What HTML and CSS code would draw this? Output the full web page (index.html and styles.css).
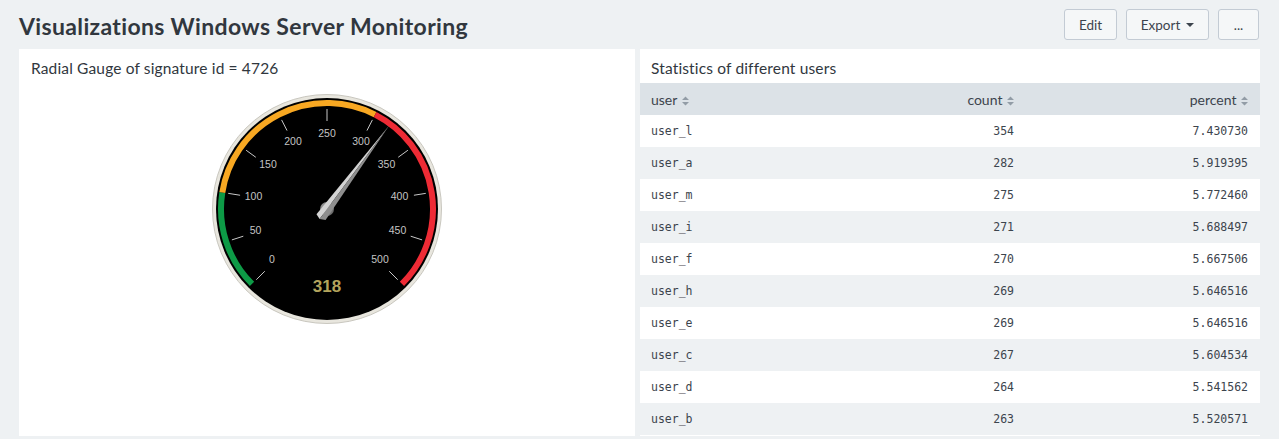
FILE: index.html
```html
<!DOCTYPE html>
<html>
<head>
<meta charset="utf-8">
<link rel="stylesheet" href="styles.css">
</head>
<body>
<div class="topbar">
  <h1 class="page-title">Visualizations Windows Server Monitoring</h1>
  <div class="actions">
    <button class="btn btn-edit">Edit</button>
    <button class="btn btn-export">Export <span class="caret"></span></button>
    <button class="btn btn-more">...</button>
  </div>
</div>
<div class="panels">
  <section class="panel panel-left">
    <h2 class="panel-title">Radial Gauge of signature id = 4726</h2>
    <div class="gauge-wrap">
      <svg class="gauge" width="232" height="232" viewBox="0 0 232 232">
        <defs>
          <radialGradient id="hubg" cx="0.4" cy="0.4" r="0.7">
            <stop offset="0" stop-color="#b0b0b0"/>
            <stop offset="1" stop-color="#5e5e5e"/>
          </radialGradient>
        </defs>
        <circle cx="116" cy="116" r="114.5" fill="#e8e6de" stroke="#c9c7bf" stroke-width="1"/>
        <circle cx="116" cy="116" r="111" fill="#000"/>
        <g fill="none" stroke-width="6">
          <path d="M41.05,190.95 A106,106 0 0 1 11.3,99.42" stroke="#0d9a46"/>
          <path d="M11.3,99.42 A106,106 0 0 1 164.12,21.55" stroke="#f8a822"/>
          <path d="M164.12,21.55 A106,106 0 0 1 190.95,190.95" stroke="#ee2b35"/>
        </g>
        <g stroke="#c8c8c8" stroke-width="1">
          <line x1="53.78" y1="178.22" x2="45.29" y2="186.71"/>
          <line x1="32.30" y1="143.19" x2="20.89" y2="146.90"/>
          <line x1="29.08" y1="102.24" x2="17.23" y2="100.36"/>
          <line x1="44.81" y1="64.27" x2="35.10" y2="57.22"/>
          <line x1="76.05" y1="37.59" x2="70.60" y2="26.90"/>
          <line x1="116" y1="28" x2="116" y2="16"/>
          <line x1="155.95" y1="37.59" x2="161.40" y2="26.90"/>
          <line x1="187.19" y1="64.27" x2="196.90" y2="57.22"/>
          <line x1="202.92" y1="102.24" x2="214.77" y2="100.36"/>
          <line x1="199.70" y1="143.19" x2="211.11" y2="146.90"/>
          <line x1="178.22" y1="178.22" x2="186.71" y2="186.71"/>
        </g>
        <g class="gauge-labels" text-anchor="middle" dominant-baseline="central">
          <text x="61" y="166">0</text>
          <text x="44.5" y="137">50</text>
          <text x="42.5" y="102.5">100</text>
          <text x="57" y="70.5">150</text>
          <text x="82" y="48">200</text>
          <text x="116" y="40">250</text>
          <text x="150" y="48">300</text>
          <text x="175.5" y="70.5">350</text>
          <text x="188.5" y="102.5">400</text>
          <text x="186.5" y="137">450</text>
          <text x="169" y="166">500</text>
        </g>
        <circle cx="116" cy="116" r="7" fill="url(#hubg)"/>
        <polygon points="178.17,32.62 105.5,121.3 108.6,126.0" fill="#d4d4d4"/>
        <polygon points="178.17,32.62 108.6,126.0 114.6,127.0" fill="#8e8e8e"/>
        <text class="gauge-value" x="116" y="193" text-anchor="middle" dominant-baseline="central">318</text>
      </svg>
    </div>
  </section>
  <section class="panel panel-right">
    <h2 class="panel-title">Statistics of different users</h2>
    <table class="stats">
      <thead>
        <tr>
          <th class="c-user">user <svg class="sort" width="7" height="10" viewBox="0 0 7 10"><path d="M0,4 L3.5,0.5 L7,4 Z M0,6 L3.5,9.5 L7,6 Z"/></svg></th>
          <th class="c-count">count <svg class="sort" width="7" height="10" viewBox="0 0 7 10"><path d="M0,4 L3.5,0.5 L7,4 Z M0,6 L3.5,9.5 L7,6 Z"/></svg></th>
          <th class="c-pct">percent <svg class="sort" width="7" height="10" viewBox="0 0 7 10"><path d="M0,4 L3.5,0.5 L7,4 Z M0,6 L3.5,9.5 L7,6 Z"/></svg></th>
        </tr>
      </thead>
      <tbody>
        <tr><td class="c-user">user_l</td><td class="c-count">354</td><td class="c-pct">7.430730</td></tr>
        <tr><td class="c-user">user_a</td><td class="c-count">282</td><td class="c-pct">5.919395</td></tr>
        <tr><td class="c-user">user_m</td><td class="c-count">275</td><td class="c-pct">5.772460</td></tr>
        <tr><td class="c-user">user_i</td><td class="c-count">271</td><td class="c-pct">5.688497</td></tr>
        <tr><td class="c-user">user_f</td><td class="c-count">270</td><td class="c-pct">5.667506</td></tr>
        <tr><td class="c-user">user_h</td><td class="c-count">269</td><td class="c-pct">5.646516</td></tr>
        <tr><td class="c-user">user_e</td><td class="c-count">269</td><td class="c-pct">5.646516</td></tr>
        <tr><td class="c-user">user_c</td><td class="c-count">267</td><td class="c-pct">5.604534</td></tr>
        <tr><td class="c-user">user_d</td><td class="c-count">264</td><td class="c-pct">5.541562</td></tr>
        <tr><td class="c-user">user_b</td><td class="c-count">263</td><td class="c-pct">5.520571</td></tr>
      </tbody>
    </table>
  </section>
</div>
</body>
</html>
```
FILE: styles.css
```css
html, body {
  margin: 0;
  padding: 0;
  background: #eef1f3;
  font-family: Lato, "Open Sans", sans-serif;
  color: #3c444d;
  overflow: hidden;
}
.topbar {
  display: flex;
  justify-content: space-between;
  align-items: flex-start;
  height: 49px;
  padding: 0 20px 0 19px;
  box-sizing: border-box;
}
.page-title {
  margin: 13px 0 0 0;
  font-size: 23px;
  line-height: 27px;
  letter-spacing: 0.35px;
  font-weight: 700;
  color: #31373e;
}
.actions {
  display: flex;
  gap: 9px;
  margin-top: 9px;
}
.btn {
  height: 31px;
  box-sizing: border-box;
  border: 1px solid #c3cbd4;
  border-radius: 3px;
  background: #f5f7f8;
  color: #3c444d;
  font-family: Lato, "Open Sans", sans-serif;
  font-size: 13.5px;
  padding: 0;
  display: flex;
  align-items: center;
  justify-content: center;
}
.btn-edit { width: 53px; }
.btn-export { width: 83px; gap: 6px; }
.btn-more { width: 41px; }
.caret {
  width: 0;
  height: 0;
  border-left: 4px solid transparent;
  border-right: 4px solid transparent;
  border-top: 4px solid #3c444d;
}
.panels {
  display: flex;
  gap: 5px;
  padding: 0 19px;
}
.panel {
  background: #fff;
  height: 387px;
  box-sizing: border-box;
}
.panel-left { width: 616px; }
.panel-right { width: 620px; }
.panel-title {
  margin: 0;
  font-size: 15.5px;
  line-height: 20px;
  letter-spacing: 0.15px;
  font-weight: 400;
  color: #31373e;
  padding: 9px 12px 5px 12px;
}
.panel-right .panel-title { padding-left: 11px; }
.gauge-wrap {
  display: flex;
  justify-content: center;
  padding-top: 10px;
}
.gauge { display: block; }
.gauge-labels text {
  font-family: "Liberation Sans", Arial, sans-serif;
  font-size: 10.5px;
  fill: #c4c4c4;
}
.gauge-value {
  font-family: "Liberation Sans", Arial, sans-serif;
  font-size: 17px;
  font-weight: 700;
  fill: #b3a45c;
}
.stats {
  width: 620px;
  border-collapse: collapse;
  table-layout: fixed;
}
.stats th {
  background: #dce2e7;
  height: 32px;
  padding: 0 12px 0 11px;
  font-size: 14px;
  font-weight: 400;
  color: #3c444d;
  text-align: left;
  white-space: nowrap;
}
.stats td {
  height: 32px;
  padding: 0 12px 0 11px;
  font-family: "DejaVu Sans Mono", "Liberation Mono", monospace;
  font-size: 11.5px;
  color: #3c444d;
}
.stats tbody tr:nth-child(even) td { background: #eef1f3; }
.stats .c-count { text-align: right; }
.stats .c-pct { text-align: right; width: 211px; }
.stats .c-user { width: 160px; }
.sort {
  fill: #929ca6;
  vertical-align: -1px;
  margin-left: 1px;
}
```
